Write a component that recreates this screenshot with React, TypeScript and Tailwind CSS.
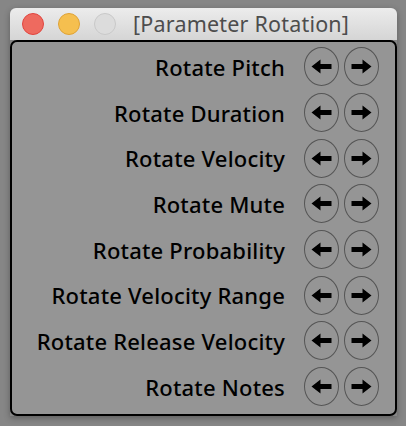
import React from 'react';

const rows = [
  'Rotate Pitch',
  'Rotate Duration',
  'Rotate Velocity',
  'Rotate Mute',
  'Rotate Probability',
  'Rotate Velocity Range',
  'Rotate Release Velocity',
  'Rotate Notes',
];

const Arrow = ({ dir }: { dir: 'left' | 'right' }) => (
  <svg width="21" height="15" viewBox="0 0 21 15" className={dir === 'left' ? '' : 'rotate-180'}>
    <path d="M0.5 7.5 L9.5 0.5 L9.5 5 L20.5 5 L20.5 10 L9.5 10 L9.5 14.5 Z" fill="#000" />
  </svg>
);

const RoundButton = ({ dir }: { dir: 'left' | 'right' }) => (
  <button className="flex h-[39px] w-[35px] items-center justify-center rounded-[50%] border-[1.5px] border-[#555]">
    <Arrow dir={dir} />
  </button>
);

export default function App() {
  return (
    <div className="h-[426px] w-[406px] bg-[#868686] pt-2 pl-[10px]" style={{ fontFamily: '"Noto Sans", sans-serif' }}>
      <div className="w-[387px] overflow-hidden rounded-t-[6px] shadow-[0_2px_6px_rgba(0,0,0,0.3)]">
        <div className="relative flex h-[32px] items-center bg-gradient-to-b from-[#ececec] to-[#d5d5d5]">
          <div className="flex gap-[14px] pl-[12px]">
            <span className="h-[22px] w-[22px] rounded-full border border-[#e0443e] bg-[#ee6a5f]" />
            <span className="h-[22px] w-[22px] rounded-full border border-[#dea236] bg-[#f5bf4f]" />
            <span className="h-[22px] w-[22px] rounded-full border border-[#c8c8c8] bg-[#dcdcdc]" />
          </div>
          <span className="ml-[17px] text-[21.5px] leading-none tracking-[0.2px] text-[#4d4d4d]">[Parameter Rotation]</span>
        </div>
        <div className="flex flex-col rounded-[7px] border-2 border-black bg-[#959595] pr-[16px] pt-[2px] pb-[4px]">
          {rows.map(r => (
            <div key={r} className="flex h-[45.7px] items-center justify-end gap-[19px]">
              <span className="text-[22px] font-medium leading-none tracking-[0.2px] text-black">{r}</span>
              <div className="flex gap-[5px]">
                <RoundButton dir="left" />
                <RoundButton dir="right" />
              </div>
            </div>
          ))}
        </div>
      </div>
    </div>
  );
}
